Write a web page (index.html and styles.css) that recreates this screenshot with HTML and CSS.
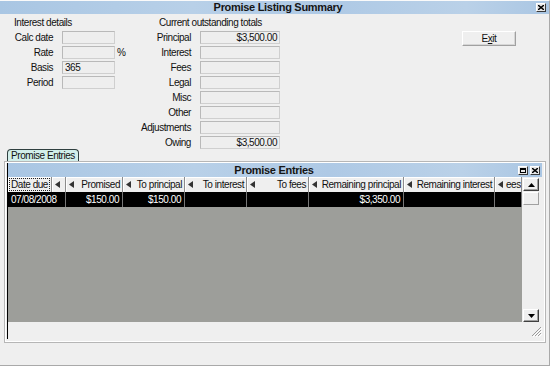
FILE: index.html
```html
<!DOCTYPE html>
<html lang="en">
<head>
  <meta charset="UTF-8">
  <title>Promise Listing Summary</title>
  <link rel="stylesheet" href="styles.css">
</head>
<body>
  <div class="window">
    <div class="titlebar">
      <span></span>
      <span class="title">Promise Listing Summary</span>
      <span class="close-btn">
        <svg width="6" height="5" viewBox="0 0 6 5"><path d="M0 0 L6 5 M6 0 L0 5" stroke="#000" stroke-width="1.4"/></svg>
      </span>
    </div>

    <div class="details">
      <div class="group group-interest">
        <div class="group-head">Interest details</div>
        <div class="row"><span class="label">Calc date</span><span class="field"></span></div>
        <div class="row"><span class="label">Rate</span><span class="field"></span><span class="unit">%</span></div>
        <div class="row"><span class="label">Basis</span><span class="field">365</span></div>
        <div class="row"><span class="label">Period</span><span class="field"></span></div>
      </div>

      <div class="group group-totals">
        <div class="group-head">Current outstanding totals</div>
        <div class="row"><span class="label">Principal</span><span class="field">$3,500.00</span></div>
        <div class="row"><span class="label">Interest</span><span class="field"></span></div>
        <div class="row"><span class="label">Fees</span><span class="field"></span></div>
        <div class="row"><span class="label">Legal</span><span class="field"></span></div>
        <div class="row"><span class="label">Misc</span><span class="field"></span></div>
        <div class="row"><span class="label">Other</span><span class="field"></span></div>
        <div class="row"><span class="label">Adjustments</span><span class="field"></span></div>
        <div class="row"><span class="label">Owing</span><span class="field">$3,500.00</span></div>
      </div>

      <button class="exit-button">E<u>x</u>it</button>
    </div>

    <div class="tabs"><span class="tab">Promise Entries</span></div>

    <div class="panel">
      <div class="child">
        <div class="child-title">
          <span></span>
          <span class="title">Promise Entries</span>
          <span class="child-buttons">
            <span class="mini-btn"><span class="restore-box"></span></span>
            <span class="mini-btn">
              <svg width="6" height="5" viewBox="0 0 6 5"><path d="M0 0 L6 5 M6 0 L0 5" stroke="#000" stroke-width="1.4"/></svg>
            </span>
          </span>
        </div>

        <div class="child-body">
          <div class="grid-area">
            <div class="grid">
              <div class="hcell"><span class="focus">Date due</span></div>
              <div class="hcell"><svg class="arrow" width="6" height="7" viewBox="0 0 6 7"><path d="M5 0 L5 7 L0 3.5 Z" fill="#333"/></svg></div>
              <div class="hcell"><svg class="arrow" width="6" height="7" viewBox="0 0 6 7"><path d="M5 0 L5 7 L0 3.5 Z" fill="#333"/></svg><span>Promised</span></div>
              <div class="hcell"><svg class="arrow" width="6" height="7" viewBox="0 0 6 7"><path d="M5 0 L5 7 L0 3.5 Z" fill="#333"/></svg><span>To principal</span></div>
              <div class="hcell"><svg class="arrow" width="6" height="7" viewBox="0 0 6 7"><path d="M5 0 L5 7 L0 3.5 Z" fill="#333"/></svg><span>To interest</span></div>
              <div class="hcell"><svg class="arrow" width="6" height="7" viewBox="0 0 6 7"><path d="M5 0 L5 7 L0 3.5 Z" fill="#333"/></svg><span>To fees</span></div>
              <div class="hcell"><svg class="arrow" width="6" height="7" viewBox="0 0 6 7"><path d="M5 0 L5 7 L0 3.5 Z" fill="#333"/></svg><span>Remaining principal</span></div>
              <div class="hcell"><svg class="arrow" width="6" height="7" viewBox="0 0 6 7"><path d="M5 0 L5 7 L0 3.5 Z" fill="#333"/></svg><span>Remaining interest</span></div>
              <div class="hcell"><svg class="arrow" width="6" height="7" viewBox="0 0 6 7"><path d="M5 0 L5 7 L0 3.5 Z" fill="#333"/></svg><span>ees</span></div>

              <div class="dcell date">07/08/2008</div>
              <div class="dcell">$150.00</div>
              <div class="dcell">$150.00</div>
              <div class="dcell"></div>
              <div class="dcell"></div>
              <div class="dcell">$3,350.00</div>
              <div class="dcell"></div>
              <div class="dcell"></div>
            </div>
          </div>

          <div class="vscroll">
            <span class="sb-btn sb-up"><svg width="7" height="4" viewBox="0 0 7 4"><path d="M0 4 L7 4 L3.5 0 Z" fill="#000"/></svg></span>
            <span class="sb-btn sb-thumb"></span>
            <span class="sb-track"></span>
            <span class="sb-btn sb-down"><svg width="7" height="4" viewBox="0 0 7 4"><path d="M0 0 L7 0 L3.5 4 Z" fill="#000"/></svg></span>
          </div>
        </div>

        <div class="child-foot">
          <svg class="grip" width="11" height="11" viewBox="0 0 11 11">
            <path d="M10 1 L1 10 M10 4 L4 10 M10 7 L7 10" stroke="#9a9a9a" stroke-width="1"/>
            <path d="M11 2 L2 11 M11 5 L5 11 M11 8 L8 11" stroke="#fff" stroke-width="1"/>
          </svg>
        </div>
      </div>
    </div>
  </div>
</body>
</html>
```

FILE: styles.css
```css
/* page */
body {
  margin: 0;
  background: #efefef;
  font-family: "Liberation Sans", Arial, sans-serif;
  font-size: 10px;
  letter-spacing: -0.45px;
  color: #111;
}

.window {
  width: 550px;
  height: 366px;
  box-sizing: border-box;
  border-top: 1px solid #fafafa;
  border-right: 1px solid #a9a9a9;
  border-bottom: 1px solid #a9a9a9;
  display: flex;
  flex-direction: column;
}

/* title bars */
.titlebar,
.child-title {
  flex-shrink: 0;
  display: grid;
  grid-template-columns: 1fr auto 1fr;
  align-items: center;
  background: linear-gradient(to right, #a9c6e3, #b8d0e8 35%, #aec9e5 60%, #bad1e8 85%, #aac6e3);
}

.titlebar {
  height: 13px;
  padding: 0 3px 0 10px;
}

.title {
  font-weight: bold;
  font-size: 11px;
  letter-spacing: -0.3px;
  line-height: 13px;
  color: #151515;
}

.close-btn,
.mini-btn {
  justify-self: end;
  width: 10px;
  height: 9px;
  box-sizing: border-box;
  border: 1px solid;
  border-color: #fff #3a3a3a #3a3a3a #fff;
  background: #e6e6e6;
  display: flex;
  align-items: center;
  justify-content: center;
}

/* detail fields */
.details {
  flex-shrink: 0;
  display: flex;
  height: 135px;
  box-sizing: border-box;
  padding-top: 2px;
}

.group-head {
  height: 15px;
  line-height: 13px;
}

.row {
  display: flex;
  height: 15px;
}

.label {
  box-sizing: border-box;
  text-align: right;
  line-height: 13px;
  padding-right: 9px;
}

.field {
  height: 13px;
  box-sizing: border-box;
  border: 1px solid #cfcfcf;
  border-top-color: #b9b9b9;
  border-left-color: #b9b9b9;
  background: #eeeeee;
  line-height: 11px;
  padding: 0 2px;
}

.unit {
  padding-left: 2px;
  line-height: 13px;
}

.group-interest {
  width: 130px;
}

.group-interest .group-head {
  padding-left: 14px;
}

.group-interest .label {
  width: 62px;
}

.group-interest .field {
  width: 53px;
}

.group-totals .group-head {
  padding-left: 29px;
}

.group-totals .label {
  width: 70px;
}

.group-totals .field {
  width: 80px;
  text-align: right;
}

.exit-button {
  margin: 15px 0 0 182px;
  width: 54px;
  height: 15px;
  padding: 0;
  font: inherit;
  letter-spacing: inherit;
  color: #111;
  background: #efefef;
  border: 1px solid;
  border-color: #fff #a0a0a0 #a0a0a0 #fff;
  box-shadow: inset -1px -1px 0 #d6d6d6;
}

/* tab strip */
.tabs {
  flex-shrink: 0;
  height: 12px;
  padding-left: 7px;
  display: flex;
}

.tab {
  width: 72px;
  box-sizing: border-box;
  border: 1px solid #2f3f3f;
  border-bottom: none;
  border-radius: 4px 4px 0 0;
  background: #d2eeea;
  line-height: 11px;
  text-align: center;
  white-space: nowrap;
}

/* entries panel */
.panel {
  flex-shrink: 0;
  margin: 0 3px 0 4px;
  height: 182px;
  box-sizing: border-box;
  border: 1px solid #b6b6b6;
  box-shadow: inset 1px 1px 0 #fff, inset -1px -1px 0 #fff;
  padding: 1px 3px 3px 2px;
}

.child {
  height: 100%;
  border-left: 1px solid #000;
  display: flex;
  flex-direction: column;
}

.child-title {
  height: 14px;
  padding-right: 2px;
}

.child-buttons {
  justify-self: end;
  display: flex;
  gap: 2px;
}

.restore-box {
  width: 6px;
  height: 5px;
  box-sizing: border-box;
  border: 1px solid #000;
  border-top-width: 2px;
}

.child-body {
  flex-shrink: 0;
  height: 145px;
  display: flex;
}

.grid-area {
  width: 514px;
  background: #9d9e9a;
}

.grid {
  display: grid;
  grid-template-columns: 44px 14px 57px 62px 62px 62px 95px 91px 27px;
  grid-auto-rows: 15px;
}

.hcell {
  display: flex;
  align-items: center;
  justify-content: space-between;
  gap: 2px;
  overflow: hidden;
  white-space: nowrap;
  padding: 0 2px 0 3px;
  background: #efefef;
  border-right: 1px solid #8c8c8c;
  box-shadow: inset 1px 1px 0 #fff;
}

.hcell:first-child {
  padding: 1px;
}

.focus {
  flex: 1;
  height: 100%;
  box-sizing: border-box;
  border: 1px dotted #222;
  line-height: 11px;
  padding-left: 1px;
}

.arrow {
  flex-shrink: 0;
}

.dcell {
  background: #000;
  color: #fff;
  border-right: 1px solid #777;
  line-height: 15px;
  text-align: right;
  padding-right: 3px;
  white-space: nowrap;
}

.dcell.date {
  grid-column: span 2;
  text-align: left;
  padding-left: 3px;
}

/* vertical scroll bar */
.vscroll {
  width: 16px;
  margin-left: 1px;
  display: flex;
  flex-direction: column;
}

.sb-btn {
  flex-shrink: 0;
  height: 13px;
  box-sizing: border-box;
  border: 1px solid;
  border-color: #fff #404040 #404040 #fff;
  background: #efefef;
  box-shadow: inset -1px -1px 0 #a0a0a0;
  display: flex;
  align-items: center;
  justify-content: center;
}

.sb-up {
  margin-top: 1px;
}

.sb-thumb {
  margin-top: 1px;
  border-color: #fff #a0a0a0 #a0a0a0 #fff;
  box-shadow: none;
}

.sb-track {
  flex: 1;
}

.child-foot {
  flex: 1;
  display: flex;
  justify-content: flex-end;
  align-items: flex-end;
  padding-bottom: 2px;
}
```
